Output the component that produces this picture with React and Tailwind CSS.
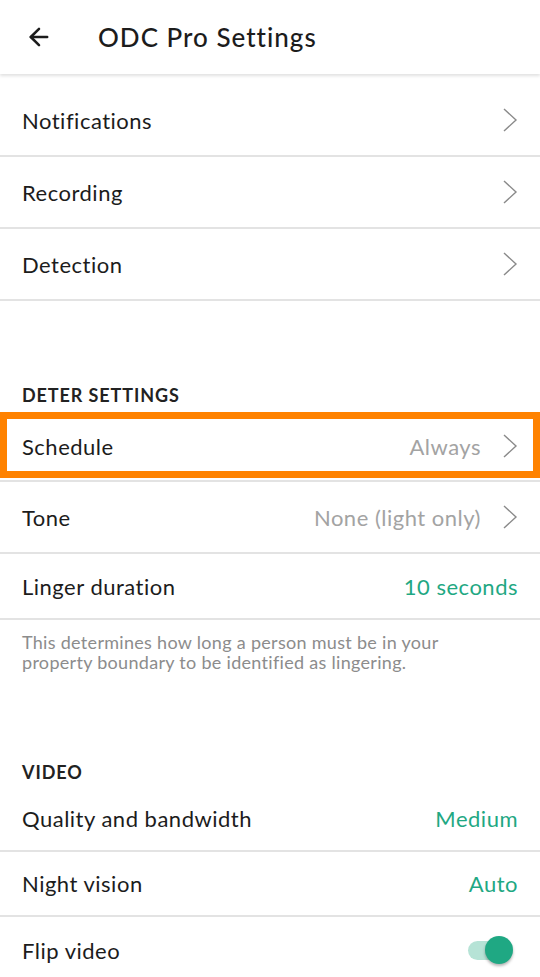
import { ArrowLeft } from 'lucide-react';

const Chevron = () => (
    <svg width="16" height="26" viewBox="0 0 16 26" fill="none" className="shrink-0">
        <path d="M2 2 L14 13 L2 24" stroke="#8a8a8a" strokeWidth="1.4" />
    </svg>
);

const Row = ({ label, value, green, chevron, h = 'h-[72px]' }) => (
    <div className={`${h} flex items-center justify-between pl-[22px] pr-[22px] border-b-2 border-[#e3e3e3]`}>
        <span className="text-[22px] tracking-[0.5px] text-[#1c1c1c]">{label}</span>
        <div className="flex items-center gap-[21px]">
            {value && (
                <span className={`text-[22px] tracking-[0.5px] ${green ? 'text-[#1fa883]' : 'text-[#a3a3a3]'}`}>{value}</span>
            )}
            {chevron && <Chevron />}
        </div>
    </div>
);

const SectionTitle = ({ children, className }) => (
    <div className={`pl-[22px] text-[18px] font-bold text-[#222] tracking-[0.9px] ${className}`}>{children}</div>
);

export default function App() {
    return (
        <div className="w-[540px] h-[977px] overflow-hidden bg-white" style={{ fontFamily: 'Lato, "Noto Sans", sans-serif' }}>
            {/* barra de topo */}
            <div className="h-[74px] flex items-center shadow-[0_2px_3px_rgba(0,0,0,0.12)] relative z-10">
                <ArrowLeft size={28} strokeWidth={2.2} className="ml-[25px] text-[#1c1c1c]" />
                <h1 className="ml-[45px] text-[26px] font-medium tracking-[1px] text-[#1c1c1c]">ODC Pro Settings</h1>
            </div>

            <div className="pt-[11px]">
                <Row label="Notifications" chevron />
                <Row label="Recording" chevron />
                <Row label="Detection" chevron />
            </div>

            <SectionTitle className="mt-[81px] mb-[3px]">DETER SETTINGS</SectionTitle>

            <div className="relative">
                <Row label="Schedule" value="Always" chevron h="h-[70px]" />
                <div className="absolute left-0 right-0 top-0 bottom-[4px] border-[7px] border-[#ff8200] pointer-events-none" />
            </div>
            <Row label="Tone" value="None (light only)" chevron />
            <Row label="Linger duration" value="10 seconds" green h="h-[66px]" />

            <p className="pl-[22px] pr-[70px] pt-[12px] text-[18px] leading-[20px] tracking-[0.3px] text-[#8c8c8c]">
                This determines how long a person must be in your property boundary to be identified as lingering.
            </p>

            <SectionTitle className="mt-[87px]">VIDEO</SectionTitle>

            <Row label="Quality and bandwidth" value="Medium" green h="h-[66px]" />
            <Row label="Night vision" value="Auto" green h="h-[65px]" />
            <div className="h-[66px] flex items-center justify-between pl-[22px] pr-[27px]">
                <span className="text-[22px] tracking-[0.5px] text-[#1c1c1c]">Flip video</span>
                <div className="relative w-[45px] h-[28px] flex items-center">
                    <div className="w-[38px] h-[19px] rounded-full bg-[#b6e3d6]" />
                    <div className="absolute right-0 top-0 w-[28px] h-[28px] rounded-full bg-[#1fa883] shadow-[0_2px_3px_rgba(0,0,0,0.3)]" />
                </div>
            </div>
        </div>
    );
}
